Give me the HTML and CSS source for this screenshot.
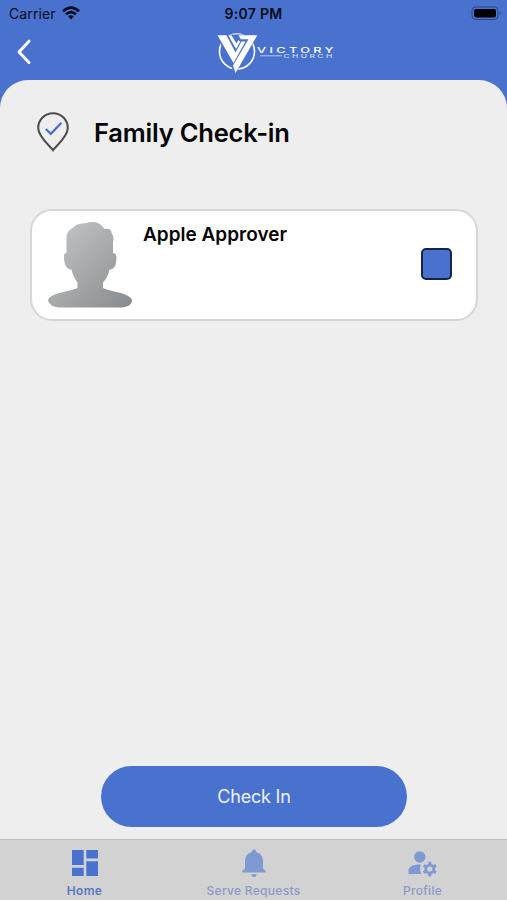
FILE: index.html
```html
<!DOCTYPE html>
<html lang="en">
<head>
<meta charset="utf-8">
<title>Family Check-in</title>
<link rel="stylesheet" href="styles.css">
</head>
<body>
<div class="app">
  <header class="header">
    <div class="status">
      <div class="carrier"><span>Carrier</span>
        <svg class="wifi" viewBox="0 0 18 14" width="18" height="14" fill="none" stroke="#050b18" stroke-width="2.6">
          <path d="M1 5.2Q9-2 17 5.2"/><path d="M4 8.3Q9 4 14 8.3"/><path d="M6.2 10.3Q9 8 11.8 10.3L9 13.4Z" fill="#050b18" stroke="none"/>
        </svg>
      </div>
      <span class="time">9:07 PM</span>
      <svg class="battery" viewBox="0 0 32 15" width="32" height="15">
        <rect x="1" y="1" width="26" height="12.5" rx="3.5" fill="none" stroke="#2c4684"/>
        <rect x="3" y="3" width="22" height="8.5" rx="2" fill="#000"/>
        <path d="M28.5 5.2q2 2 0 4z" fill="#2c4684"/>
      </svg>
    </div>
    <div class="nav">
      <svg class="back" viewBox="0 0 16 26" width="16" height="26" fill="none" stroke="#fff" stroke-width="3" stroke-linecap="round" stroke-linejoin="round"><path d="M13 2.2 3 13l10 10.5"/></svg>
      <svg class="logo" viewBox="0 0 118 42" width="118" height="42">
        <circle cx="20" cy="19.500" r="17.500" fill="none" stroke="#fff" stroke-width="1.600"/>
        <path d="M.5 3.200H40L18 41 14 32Z" fill="#4972cf" stroke="#4972cf" stroke-width="1.500"/>
        <path d="M.5 3.200H9.500L18.500 20.500 24.500 9.500H28.500L16.500 31Z" fill="#fff"/>
        <path d="M21.500 3.200H40.300L18.500 41 16 33.500 31.500 7.200H23.800Z" fill="#fff"/>
        <path d="M11.300 3.200H14.500L19.500 11.500 21.300 8.300 23.300 9.500 19 17Z" fill="#fff"/>
        <text class="logo-name" transform="translate(40 20.600) scale(1.7 1)" textLength="45" lengthAdjust="spacing">VICTORY</text>
        <path d="M43 23.800H65" stroke="#c3d2f3" stroke-width=".9"/>
        <text class="logo-sub" transform="translate(66.500 25.800) scale(1.9 1)" textLength="25.700" lengthAdjust="spacing">CHURCH</text>
      </svg>
    </div>
  </header>
  <main class="sheet">
    <div class="heading">
      <svg class="pin" viewBox="0 0 34 40" width="34" height="40" fill="none">
        <path d="M17 38.200C14 34 2.200 25 2.200 16a14.800 14.800 0 0 1 29.600 0C31.800 25 20 34 17 38.200Z" stroke="#4c4c4e" stroke-width="2"/>
        <path d="M9.800 17 14.800 21.800 25.500 10.800" stroke="#4972cf" stroke-width="2.300"/>
      </svg>
      <h1><span>Family Check-in</span></h1>
    </div>
    <section class="card">
      <svg class="avatar" viewBox="0 0 86 88" width="86" height="88">
        <defs><linearGradient id="shade" x1="0" y1="0" x2="1" y2="1"><stop offset="0" stop-color="#c6c8c9"/><stop offset="1" stop-color="#888b8d"/></linearGradient></defs>
        <path fill="url(#shade)" d="M19.500 32V17C19.500 11 23 8 26.500 6.500C29 2.500 35 3 39 2C44 .5 51 0 55 5C56.500 6 57 7.500 57.500 8C61 7 65 8 64.500 12Q67.500 16 66 21V32C69.500 32 70 36 69 41C68.500 46 66 48.500 62.500 48.500C61.500 54 59 58 56 61.500V67C64 71 81 71 85 79C85 84 80 86.500 73 86.500H14C7 86.500 2 84 1 79C5 71 22 71 30.500 67V61.500C28 58 25.500 54 24.500 48.500C21 48.500 18.500 46 17.500 41C16.500 36 16.500 32 19.500 32Z"/>
      </svg>
      <span class="person">Apple Approver</span>
      <span class="checkbox"></span>
    </section>
    <button class="submit"><span>Check In</span></button>
  </main>
  <nav class="tabs">
    <a class="tab active">
      <svg viewBox="0 0 30 30" width="30" height="30" fill="currentColor"><path d="M2 2h11.700v15H2zM16.300 2H28v8.600H16.300zM2 19.700h11.700V28H2zM16.300 13.200H28V28H16.300z"/></svg>
      <span>Home</span>
    </a>
    <a class="tab">
      <svg viewBox="0 0 30 30" width="30" height="30" fill="currentColor"><path d="M15 1.500c1.500 0 2.200 1 2.200 2.400C21.500 5 24 8.500 24 13v7.500l2.600 2.600v1.500H3.400v-1.500L6 20.500V13c0-4.500 2.500-8 6.800-9.100C12.800 2.500 13.500 1.500 15 1.500zM12.400 26.200h5.200c0 1.700-1.100 2.800-2.600 2.800s-2.600-1.100-2.600-2.800z"/></svg>
      <span>Serve Requests</span>
    </a>
    <a class="tab">
      <svg viewBox="0 0 30 30" width="30" height="30" fill="currentColor"><circle cx="11.800" cy="9" r="5.700"/><path d="M.5 26V22.500C.5 18 6.500 16 13 16.500Q11 21 13.500 26z"/><circle cx="21.800" cy="21" r="4" fill="none" stroke="currentColor" stroke-width="2.800"/><path d="M21.800 13.800v3M21.800 25.200v3M15.600 17.400l2.600 1.500M25.400 23.100l2.600 1.500M28 17.400l-2.600 1.500M18.200 23.100l-2.600 1.500" stroke="currentColor" stroke-width="3"/></svg>
      <span>Profile</span>
    </a>
  </nav>
</div>
</body>
</html>
```
FILE: styles.css
```css
* { box-sizing: border-box; }
body { margin: 0; font-family: Inter, "Liberation Sans", sans-serif; }
.app { width: 507px; height: 900px; display: flex; flex-direction: column; background: #4972cf; overflow: hidden; }
.header { height: 80px; flex: none; color: #050b18; }
.status { height: 28px; display: grid; grid-template-columns: 1fr auto 1fr; align-items: center; padding: 0 5px 0 9px; font-size: 14px; line-height: 28px; }
.carrier { display: flex; align-items: center; gap: 6px; letter-spacing: .1px; }
.wifi { margin-top: -2px; }
.time { font-weight: 600; letter-spacing: .3px; transform: translateX(-2px); }
.battery { justify-self: end; margin: -2px -1px 0 0; }
.nav { height: 52px; display: flex; padding: 4px 0 0 16px; }
.back { margin-top: 7px; }
.logo { margin-left: 185px; overflow: visible; }
.logo-name { font-size: 7.5px; font-weight: 500; fill: #fff; }
.logo-sub { font-size: 4.500px; font-weight: 500; fill: #d3dff8; }
.sheet { flex: 1; min-height: 0; display: flex; flex-direction: column; background: #eee; border-radius: 28px 28px 0 0; padding: 0 29px 12px 30px; }
.heading { height: 129px; flex: none; display: flex; align-items: flex-start; padding: 32px 0 0 6px; }
h1 { margin: 1px 0 0 24px; font-size: 25.500px; line-height: 40px; font-weight: 600; letter-spacing: -.2px; color: #050505; white-space: nowrap; }
.card { height: 112px; flex: none; display: flex; align-items: flex-start; background: #fff; border: 2px solid #d6d6d6; border-radius: 22px; padding: 10px 24px 0 15px; }
.person { flex: 1; margin-left: 10px; margin-top: 2px; font-size: 19px; line-height: 24px; font-weight: 600; color: #050505; }
.checkbox { width: 31px; height: 32px; margin-top: 27px; background: #4972cf; border: 2px solid #182540; border-radius: 5px; }
.submit { width: 306px; height: 61px; margin: auto auto 0; margin-left: 71px; border: 0; border-radius: 31px; background: #4972cf; color: #edf3ff; font: 400 18px/61px Inter, sans-serif; letter-spacing: -.2px; padding: 0; }
.tabs { height: 61px; flex: none; display: grid; grid-template-columns: repeat(3, 1fr); background: #d2d2d2; border-top: 1px solid #bdbdbd; }
.tab { display: flex; flex-direction: column; align-items: center; padding-top: 8px; color: #7f9ad3; font-size: 12px; line-height: 14px; font-weight: 500; letter-spacing: .3px; }
.tab span { margin-top: 6px; color: #8b9bcb; }
.tab.active { color: #4972cf; font-weight: 600; }
.tab.active span { color: #5878c5; }
```
